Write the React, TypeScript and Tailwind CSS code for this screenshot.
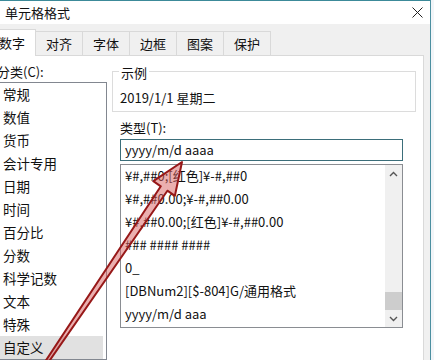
const categories = ['常规', '数值', '货币', '会计专用', '日期', '时间', '百分比', '分数', '科学记数', '文本', '特殊', '自定义']

const formats = [
  '¥#,##0;[红色]¥-#,##0',
  '¥#,##0.00;¥-#,##0.00',
  '¥#,##0.00;[红色]¥-#,##0.00',
  '### #### ####',
  '0_',
  '[DBNum2][$-804]G/通用格式',
  'yyyy/m/d aaa'
]

const tabs = ['对齐', '字体', '边框', '图案', '保护']

function TitleBar() {
  return (
    <div className="flex h-[25px] items-center justify-between bg-white pl-[5px] pr-[7px] text-[13px]">
      <span>单元格格式</span>
      <svg width="11" height="11" viewBox="0 0 11 11" stroke="#222" strokeWidth="1" fill="none">
        <path d="M0.5 0.5l10 10M10.5 0.5l-10 10" />
      </svg>
    </div>
  )
}

function Tabs() {
  return (
    <div className="flex h-[31px] items-end text-[13px]">
      <div className="relative z-10 -mb-px -ml-[12px] flex h-[27px] w-[48px] items-center justify-center border border-b-0 border-[#d9d9d9] bg-white">
        数字
      </div>
      {tabs.map(t => (
        <div
          key={t}
          className="-ml-px flex h-[24px] w-[48px] items-center justify-center border border-b-0 border-[#d9d9d9] bg-[#f0f0f0]"
        >
          {t}
        </div>
      ))}
    </div>
  )
}

function Chevron({ up }: { up?: boolean }) {
  return (
    <svg width="9" height="6" viewBox="0 0 9 6" fill="none" stroke="#555" strokeWidth="1.4">
      <path d={up ? 'M1 5l3.5-3.5L8 5' : 'M1 1l3.5 3.5L8 1'} />
    </svg>
  )
}

function Panel() {
  return (
    <div className="flex w-[424px] flex-1 border-t border-r border-[#d9d9d9] bg-white text-[13px]">
      <div className="-ml-[3px] flex w-[110px] shrink-0 flex-col pt-[6px]">
        <div className="h-[20px] leading-[20px]">分类(C):</div>
        <div className="ml-[2px] flex-1 border border-[#828790]">
          <ul>
            {categories.map(c => (
              <li
                key={c}
                className={`mr-[3px] h-[23px] pl-[3px] text-[13.5px] leading-[23px] ${c === '自定义' ? 'bg-[#e1e1e1]' : ''}`}
              >
                {c}
              </li>
            ))}
          </ul>
        </div>
      </div>

      <div className="ml-[5px] flex w-[304px] flex-col">
        <div className="relative mt-[15px] h-[41px] border border-[#dcdcdc]">
          <span className="absolute -top-[9px] left-[6px] bg-white px-[2px] leading-[20px]">示例</span>
          <div className="pl-[7px] pt-[16px] leading-[20px]">2019/1/1 星期二</div>
        </div>

        <div className="ml-[8px] w-[283px]">
          <div className="mt-[6px] h-[20px] leading-[20px]">类型(T):</div>
          <div className="mt-px flex h-[22px] items-center border border-[#3b6e7a] pl-[4px]">yyyy/m/d aaaa</div>
          <div className="mt-[3px] flex h-[164px] border border-[#8a8d92]">
            <ul className="flex-1 pl-[4px]">
              {formats.map(f => (
                <li key={f} className="h-[23px] whitespace-nowrap leading-[21px]">
                  {f}
                </li>
              ))}
            </ul>
            <div className="flex w-[17px] flex-col bg-[#f0f0f0]">
              <div className="flex h-[17px] items-center justify-center">
                <Chevron up />
              </div>
              <div className="flex-1" />
              <div className="h-[18px] bg-[#cdcdcd]" />
              <div className="flex h-[17px] items-center justify-center">
                <Chevron />
              </div>
            </div>
          </div>
        </div>
      </div>
    </div>
  )
}

function ArrowOverlay() {
  // red annotation arrow pointing at the type input
  return (
    <svg className="pointer-events-none absolute inset-0" width="434" height="360" viewBox="0 0 434 360">
      <polygon
        points="182,162 174.9,195.8 167.4,190.7 43.2,369.8 40.8,368.2 160.8,186.3 153.3,181.2"
        fill="rgba(215,95,95,0.5)"
        stroke="#971818"
        strokeWidth="2"
        strokeLinejoin="round"
      />
    </svg>
  )
}

export default function App() {
  return (
    <div className="relative flex h-[360px] w-[434px] overflow-hidden bg-[#f2f5f8] font-['Noto_Sans_CJK_SC',sans-serif] text-[#111]">
      <div className="flex w-[430px] flex-col border-t border-[#3c8a99]">
        <TitleBar />
        <div className="flex flex-1 flex-col bg-[#f0f0f0]">
          <Tabs />
          <Panel />
        </div>
      </div>
      <div className="w-px bg-[#4b8fa0]" />
      <ArrowOverlay />
    </div>
  )
}
